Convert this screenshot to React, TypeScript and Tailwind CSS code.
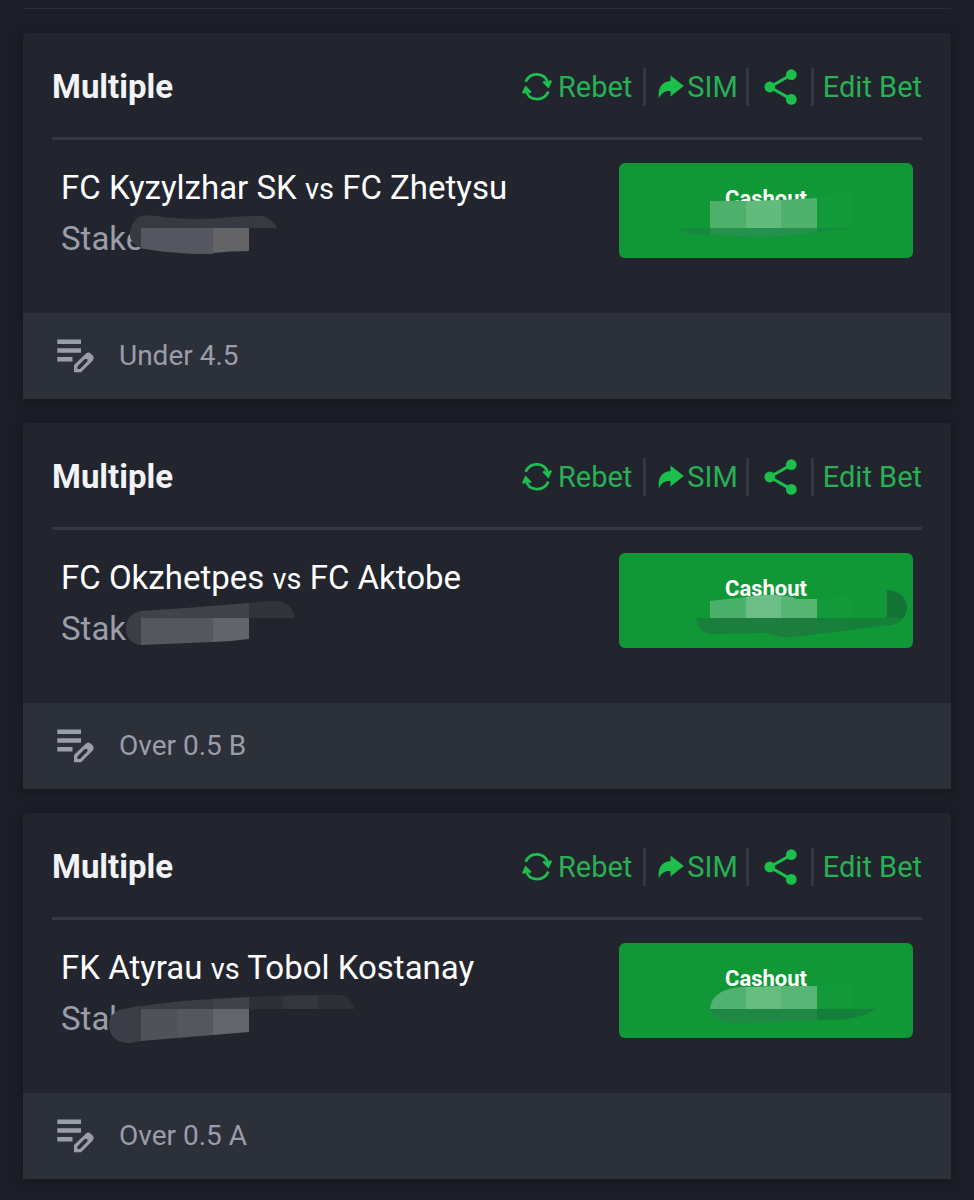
import type { ReactNode } from 'react';

type Bet = {
  id: string;
  home: string;
  away: string;
  pick: string;
  stakeMask: ReactNode;
  cashoutMask: ReactNode;
};

const bets: Bet[] = [
  {
    id: 'kyzylzhar',
    home: 'FC Kyzylzhar SK',
    away: 'FC Zhetysu',
    pick: 'Under 4.5',
    stakeMask: (
      <>
        <path fill="#383a42" d="M80 34C73 31 69 27 69 20C70 9 75 2 85 1C98 2 115 5 135 5C158 5 172 2 200 2C208 3 214 9 216 14H187V35H80Z" />
        <path fill="#55565f" d="M80 14H152V40Q108 40 80 34Z" />
        <path fill="#646366" d="M152 14H188V37Q170 37 152 39Z" />
      </>
    ),
    cashoutMask: (
      <>
        <path fill="#129a3a" d="M198 34L233 28V65H198Z" />
        <path fill="#4fb06c" d="M91 38H127V66H91Z" />
        <path fill="#62ba7c" d="M127 38L162 37V66H127Z" />
        <path fill="#50b16e" d="M162 37L198 35V66H162Z" />
        <path fill="#158a3c" d="M58 65H233Q212 67 198 69Q165 74 141 74L81 72Q66 71 58 65Z" />
        <path fill="#25924b" d="M91 65H198V69Q165 74 141 74L91 72Z" />
      </>
    ),
  },
  {
    id: 'okzhetpes',
    home: 'FC Okzhetpes',
    away: 'FC Aktobe',
    pick: 'Over 0.5 B',
    stakeMask: (
      <>
        <path fill="#32343c" d="M187 -1Q205 -3 218 -3C227 -1 233 6 234 14H187Z" />
        <path fill="#3c3e47" d="M80 7C70 9 65 15 65 24C65 34 70 40 80 41Z" />
        <path fill="#41434b" d="M80 7L125 4L188 -1V14H80Z" />
        <path fill="#55575f" d="M80 14H152V38L80 41Z" />
        <path fill="#62646b" d="M152 14H188V35L170 37L152 38Z" />
      </>
    ),
    cashoutMask: (
      <>
        <path fill="#129a3a" d="M198 47L233 42V65H198Z" />
        <path fill="#4bb069" d="M91 48L127 44V66H91Z" />
        <path fill="#6cbd86" d="M127 44Q145 41 162 42V66H127Z" />
        <path fill="#57b473" d="M162 42Q172 43 178 46H198V66H162Z" />
        <path fill="#147436" d="M268 37C280 37 288 45 288 54C288 64 280 72 268 72Z" />
        <path fill="#167f39" d="M77 65H284Q279 71 268 72L231 77L198 81Q175 84 163 84L148 80L91 81C83 80 78 74 77 65Z" />
        <path fill="#1c7d3f" d="M94 65H198V81Q175 84 163 84L148 80L111 80Q98 77 94 65Z" />
      </>
    ),
  },
  {
    id: 'atyrau',
    home: 'FK Atyrau',
    away: 'Tobol Kostanay',
    pick: 'Over 0.5 A',
    stakeMask: (
      <>
        <path fill="#2e3038" d="M187 3Q222 1 255 1H281C288 4 292 9 294 15H187Z" />
        <path fill="#34363d" d="M222 2L257 1V15H222Z" />
        <path fill="#3c3e47" d="M80 12Q74 12 68 14C54 15 48 22 48 31C48 42 56 49 68 49L80 47Z" />
        <path fill="#3b3d45" d="M80 12L121 7L152 5V15H80Z" />
        <path fill="#41434a" d="M152 5L188 3V15H152Z" />
        <path fill="#50525a" d="M80 15H116V44L80 47Z" />
        <path fill="#55575e" d="M116 15H152V41L116 44Z" />
        <path fill="#63656c" d="M152 15H188V38L152 41Z" />
      </>
    ),
    cashoutMask: (
      <>
        <path fill="#129a3a" d="M198 43L233 40V65H198Z" />
        <path fill="#51b170" d="M91 66C92 54 102 44 127 44V66Z" />
        <path fill="#67bd80" d="M127 44L162 43V66H127Z" />
        <path fill="#58b575" d="M162 43H198V66H162Z" />
        <path fill="#158039" d="M198 66H257Q243 75 221 77H198Z" />
        <path fill="#208844" d="M91 66H198V77L127 80H111Q96 78 91 66Z" />
      </>
    ),
  },
];

function RebetIcon() {
  return (
    <svg aria-hidden="true" viewBox="0 0 30 30" className="h-[30px] w-[30px]" fill="none" stroke="currentColor" strokeWidth="2.7">
      <path d="M3.6 9.8C8.5 -0.8 23.5 0 26.3 12" />
      <path d="M20.4 10.2L22.2 8.6L25.2 10.4L28.4 8L30 9.2L26.6 16.4Z" fill="currentColor" stroke="none" />
      <path d="M26.4 19.6C21.5 30.2 6.5 29.4 3.7 18" />
      <path d="M0 20.8L3.4 13.6L9.6 19.8L7.8 21.4L4.8 19.6L1.6 22Z" fill="currentColor" stroke="none" />
    </svg>
  );
}

function ForwardIcon() {
  return (
    <svg aria-hidden="true" viewBox="0 0 26 24" className="h-6 w-[26px]" fill="currentColor">
      <path d="M12.5 0.5L25.8 11L12.5 21.5V16C7 15.5 3 18 1 23.5C-0.8 14 3.5 6.5 12.5 6Z" />
    </svg>
  );
}

function ShareIcon() {
  return (
    <svg aria-hidden="true" viewBox="0 0 34 36" className="h-9 w-[34px]" fill="currentColor" stroke="currentColor">
      <path d="M27.3 5.7L5.8 18L27.3 30.4" fill="none" strokeWidth="3" />
      <circle cx="27.3" cy="5.7" r="5.4" stroke="none" />
      <circle cx="5.8" cy="18" r="5.4" stroke="none" />
      <circle cx="27.3" cy="30.4" r="5.4" stroke="none" />
    </svg>
  );
}

function EditListIcon() {
  return (
    <svg aria-hidden="true" viewBox="0 0 38 34" className="h-[34px] w-[38px]" fill="currentColor">
      <path d="M0.3 0.5H24V5H0.3ZM0.3 9.2H24V13.7H0.3ZM0.3 18H15.5V22.4H0.3Z" />
      <path
        fillRule="evenodd"
        d="M17 26L29 14.5Q31.4 12.5 33.6 14.4L36.2 17Q37.8 19.4 35.8 21.6L24 33.2H17ZM20.4 27.4V30H23L30.4 22.5V19.9H27.8Z"
      />
    </svg>
  );
}

function Separator() {
  return <span aria-hidden="true" className="h-[38px] w-[3px] bg-[#363941]" />;
}

function BetCard({ bet }: { bet: Bet }) {
  return (
    <article className="overflow-hidden rounded-t bg-[#22252e] shadow-[0_2px_12px_rgba(0,0,0,0.3)]">
      <div className="px-[29px]">
        <header className="flex items-center justify-between border-b-3 border-[#363941] pt-[34px] pb-[30px]">
          <h2 className="text-[33px] leading-10 font-bold text-[#f2f3f7]">Multiple</h2>
          <div className="flex items-center text-[29px] leading-10 text-[#28b154]">
            <button type="button" className="mr-[11px] flex items-center gap-1.5">
              <span className="text-[#20bd4f]"><RebetIcon /></span>
              Rebet
            </button>
            <Separator />
            <button type="button" className="mr-2 ml-3 flex items-center gap-[3px]">
              <span className="text-[#1cbf4b]"><ForwardIcon /></span>
              SIM
            </button>
            <Separator />
            <button type="button" aria-label="Share" className="mr-[13px] ml-[15px] text-[#1cbf4b]">
              <ShareIcon />
            </button>
            <Separator />
            <button type="button" className="ml-[9px]">Edit Bet</button>
          </div>
        </header>
        <div className="flex items-start justify-between px-[9px] pt-[23px] pb-[49px] text-[33px] leading-[50px]">
          <div>
            <h3 className="text-white">
              {bet.home} <span className="text-[29px]">vs</span> {bet.away}
            </h3>
            <p className="relative text-[#9a9daa]">
              Stake
              <svg aria-hidden="true" viewBox="0 0 300 51" className="absolute top-0 left-0 h-[51px] w-[300px] overflow-visible">
                {bet.stakeMask}
              </svg>
            </p>
          </div>
          <button
            type="button"
            className="relative h-[95px] w-[294px] rounded-md bg-[#109837] pb-6 text-[22px] leading-7 font-bold text-white"
          >
            Cashout
            <svg aria-hidden="true" viewBox="0 0 294 95" className="absolute top-0 left-0 h-[95px] w-[294px]">
              {bet.cashoutMask}
            </svg>
          </button>
        </div>
      </div>
      <footer className="flex items-center gap-6 bg-[#2c3038] px-[34px] py-6 text-[28px] leading-[38px] text-[#9a9daa]">
        <EditListIcon />
        <span>{bet.pick}</span>
      </footer>
    </article>
  );
}

export default function App() {
  return (
    <main className="min-h-screen bg-[#1b1e27] px-[23px] pt-2 pb-[21px] font-['Roboto',sans-serif]">
      <hr className="mb-6 border-[#2b2e37]" />
      <div className="flex flex-col gap-6">
        {bets.map((bet) => (
          <BetCard key={bet.id} bet={bet} />
        ))}
      </div>
    </main>
  );
}
